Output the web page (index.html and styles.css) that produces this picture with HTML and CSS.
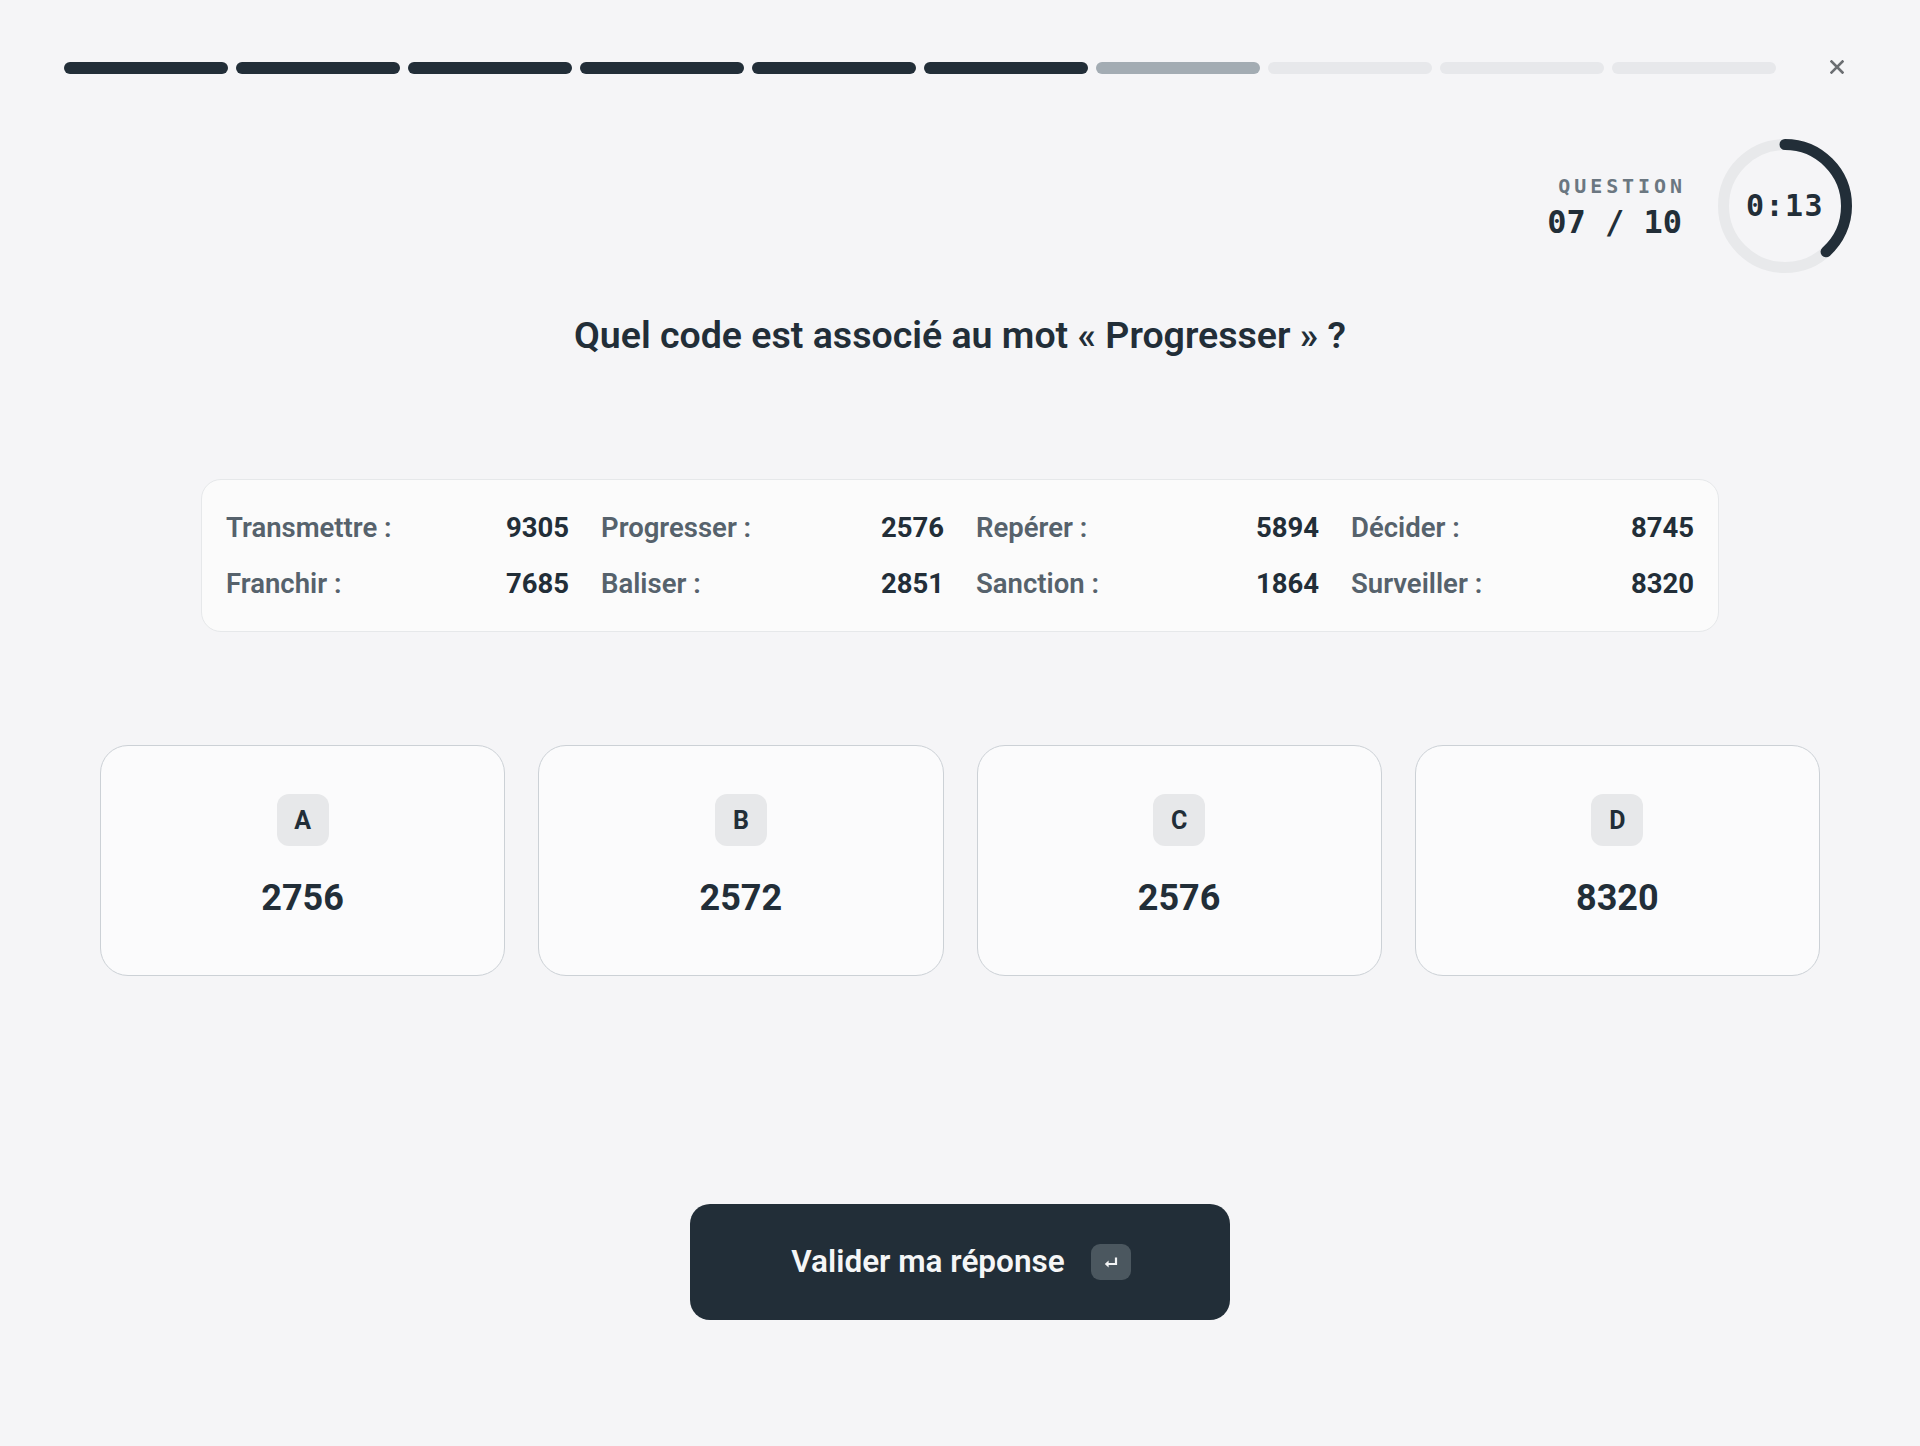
FILE: index.html
```
<!DOCTYPE html>
<html lang="fr">
<head>
<meta charset="utf-8">
<title>Quiz</title>
<link rel="stylesheet" href="styles.css">
</head>
<body>
<div class="page">
  <header class="topbar">
    <div class="progress">
      <span class="seg done"></span>
      <span class="seg done"></span>
      <span class="seg done"></span>
      <span class="seg done"></span>
      <span class="seg done"></span>
      <span class="seg done"></span>
      <span class="seg current"></span>
      <span class="seg"></span>
      <span class="seg"></span>
      <span class="seg"></span>
    </div>
    <button class="close" aria-label="Fermer">
      <svg width="14" height="14" viewBox="0 0 14 14"><path d="M1.5 1.5 L12.5 12.5 M12.5 1.5 L1.5 12.5" stroke="#6b6e72" stroke-width="2.6" stroke-linecap="square" fill="none"/></svg>
    </button>
  </header>

  <section class="status">
    <div class="counter">
      <div class="counter-label">QUESTION</div>
      <div class="counter-value">07 / 10</div>
    </div>
    <div class="timer">
      <svg class="timer-ring" width="134" height="134" viewBox="0 0 134 134">
        <circle cx="67" cy="67" r="61.5" fill="none" stroke="#e8e9eb" stroke-width="11"/>
        <circle cx="67" cy="67" r="61.5" fill="none" stroke="#222e38" stroke-width="11" stroke-linecap="round" stroke-dasharray="148 400" transform="rotate(-90 67 67)"/>
      </svg>
      <div class="timer-text">0:13</div>
    </div>
  </section>

  <h1 class="question">Quel code est associé au mot « Progresser » ?</h1>

  <section class="words">
    <div class="word"><span class="w-label">Transmettre :</span><span class="w-code">9305</span></div>
    <div class="word"><span class="w-label">Progresser :</span><span class="w-code">2576</span></div>
    <div class="word"><span class="w-label">Repérer :</span><span class="w-code">5894</span></div>
    <div class="word"><span class="w-label">Décider :</span><span class="w-code">8745</span></div>
    <div class="word"><span class="w-label">Franchir :</span><span class="w-code">7685</span></div>
    <div class="word"><span class="w-label">Baliser :</span><span class="w-code">2851</span></div>
    <div class="word"><span class="w-label">Sanction :</span><span class="w-code">1864</span></div>
    <div class="word"><span class="w-label">Surveiller :</span><span class="w-code">8320</span></div>
  </section>

  <section class="answers">
    <div class="answer"><span class="key">A</span><span class="answer-value">2756</span></div>
    <div class="answer"><span class="key">B</span><span class="answer-value">2572</span></div>
    <div class="answer"><span class="key">C</span><span class="answer-value">2576</span></div>
    <div class="answer"><span class="key">D</span><span class="answer-value">8320</span></div>
  </section>

  <div class="actions">
    <button class="submit">
      <span class="submit-text">Valider ma réponse</span>
      <span class="enter">
        <svg width="16" height="13" viewBox="0 0 16 13"><path d="M13 1.5 V8 H4" stroke="#f3f4f5" stroke-width="2.2" fill="none"/><path d="M1.8 8 L5.6 4.6 V11.4 Z" fill="#f3f4f5"/></svg>
      </span>
    </button>
  </div>
</div>
</body>
</html>
```

FILE: styles.css
```
* { box-sizing: border-box; }

html, body {
  margin: 0;
  padding: 0;
}

body {
  background: #f5f5f7;
  font-family: Roboto, "Liberation Sans", Arial, sans-serif;
  color: #222e38;
  width: 1920px;
  min-height: 1446px;
}

.page {
  display: flex;
  flex-direction: column;
}

.topbar {
  display: flex;
  align-items: center;
  padding: 62px 0 0 64px;
  height: 74px;
}

.progress {
  display: flex;
  gap: 8px;
  width: 1712px;
  flex: none;
}

.seg {
  flex: 1;
  height: 12px;
  border-radius: 6px;
  background: #e7e8eb;
}

.seg.done { background: #222e38; }
.seg.current { background: #a3acb3; }

.close {
  margin-left: 47px;
  width: 28px;
  height: 28px;
  border: 0;
  padding: 0;
  background: transparent;
  display: flex;
  align-items: center;
  justify-content: center;
  margin-top: -2px;
}

.status {
  display: flex;
  justify-content: flex-end;
  align-items: center;
  gap: 36px;
  padding-right: 68px;
  margin-top: 65px;
}

.counter {
  display: flex;
  flex-direction: column;
  align-items: flex-end;
  font-family: "DejaVu Sans Mono", "Liberation Mono", monospace;
  padding-top: 2px;
}

.counter-label {
  font-size: 20px;
  line-height: 24px;
  font-weight: 700;
  letter-spacing: 3.9px;
  margin-right: -3.9px;
  color: #6b7781;
}

.counter-value {
  font-size: 32px;
  line-height: 38px;
  font-weight: 700;
  color: #222e38;
  margin-top: 5px;
}

.timer {
  display: grid;
  width: 134px;
  height: 134px;
}

.timer-ring, .timer-text {
  grid-area: 1 / 1;
}

.timer-text {
  align-self: center;
  justify-self: center;
  font-family: "DejaVu Sans Mono", "Liberation Mono", monospace;
  font-size: 30px;
  font-weight: 700;
  letter-spacing: 1.5px;
  color: #222e38;
  margin-top: -2px;
}

.question {
  margin: 40px 0 0;
  text-align: center;
  font-size: 37.5px;
  line-height: 44px;
  font-weight: 600;
  color: #222e38;
}

.words {
  margin: 122px auto 0;
  width: 1518px;
  background: #fbfbfb;
  border: 1px solid #e6e8ea;
  border-radius: 20px;
  padding: 29px 24px 29px 24px;
  display: grid;
  grid-template-columns: repeat(4, 1fr);
  column-gap: 32px;
  row-gap: 19px;
}

.word {
  display: flex;
  justify-content: space-between;
  align-items: baseline;
  font-size: 27.5px;
  line-height: 37px;
}

.w-label {
  color: #56626c;
  font-weight: 600;
}

.w-code {
  color: #222e38;
  font-weight: 700;
}

.answers {
  margin: 113px auto 0;
  width: 1720px;
  display: grid;
  grid-template-columns: repeat(4, 1fr);
  gap: 33px;
}

.answer {
  height: 231px;
  background: #fbfbfc;
  border: 1.5px solid #ccd1d6;
  border-radius: 28px;
  display: flex;
  flex-direction: column;
  align-items: center;
  padding-top: 48px;
}

.key {
  width: 52px;
  height: 52px;
  border-radius: 12px;
  background: #e7e8ea;
  display: flex;
  align-items: center;
  justify-content: center;
  font-size: 25px;
  font-weight: 700;
  color: #222e38;
}

.answer-value {
  margin-top: 29px;
  font-size: 36px;
  line-height: 46px;
  font-weight: 700;
  color: #222e38;
}

.actions {
  display: flex;
  justify-content: center;
  margin-top: 228px;
}

.submit {
  width: 540px;
  height: 116px;
  border: 0;
  border-radius: 20px;
  background: #222e38;
  display: flex;
  align-items: center;
  justify-content: center;
  gap: 26px;
  padding: 0 0 0 2px;
  font-family: Roboto, "Liberation Sans", Arial, sans-serif;
}

.submit-text {
  font-size: 31.5px;
  font-weight: 600;
  color: #f5f6f7;
  margin-top: -2px;
}

.enter {
  width: 40px;
  height: 36px;
  border-radius: 9px;
  background: #4b575f;
  display: flex;
  align-items: center;
  justify-content: center;
}
```
